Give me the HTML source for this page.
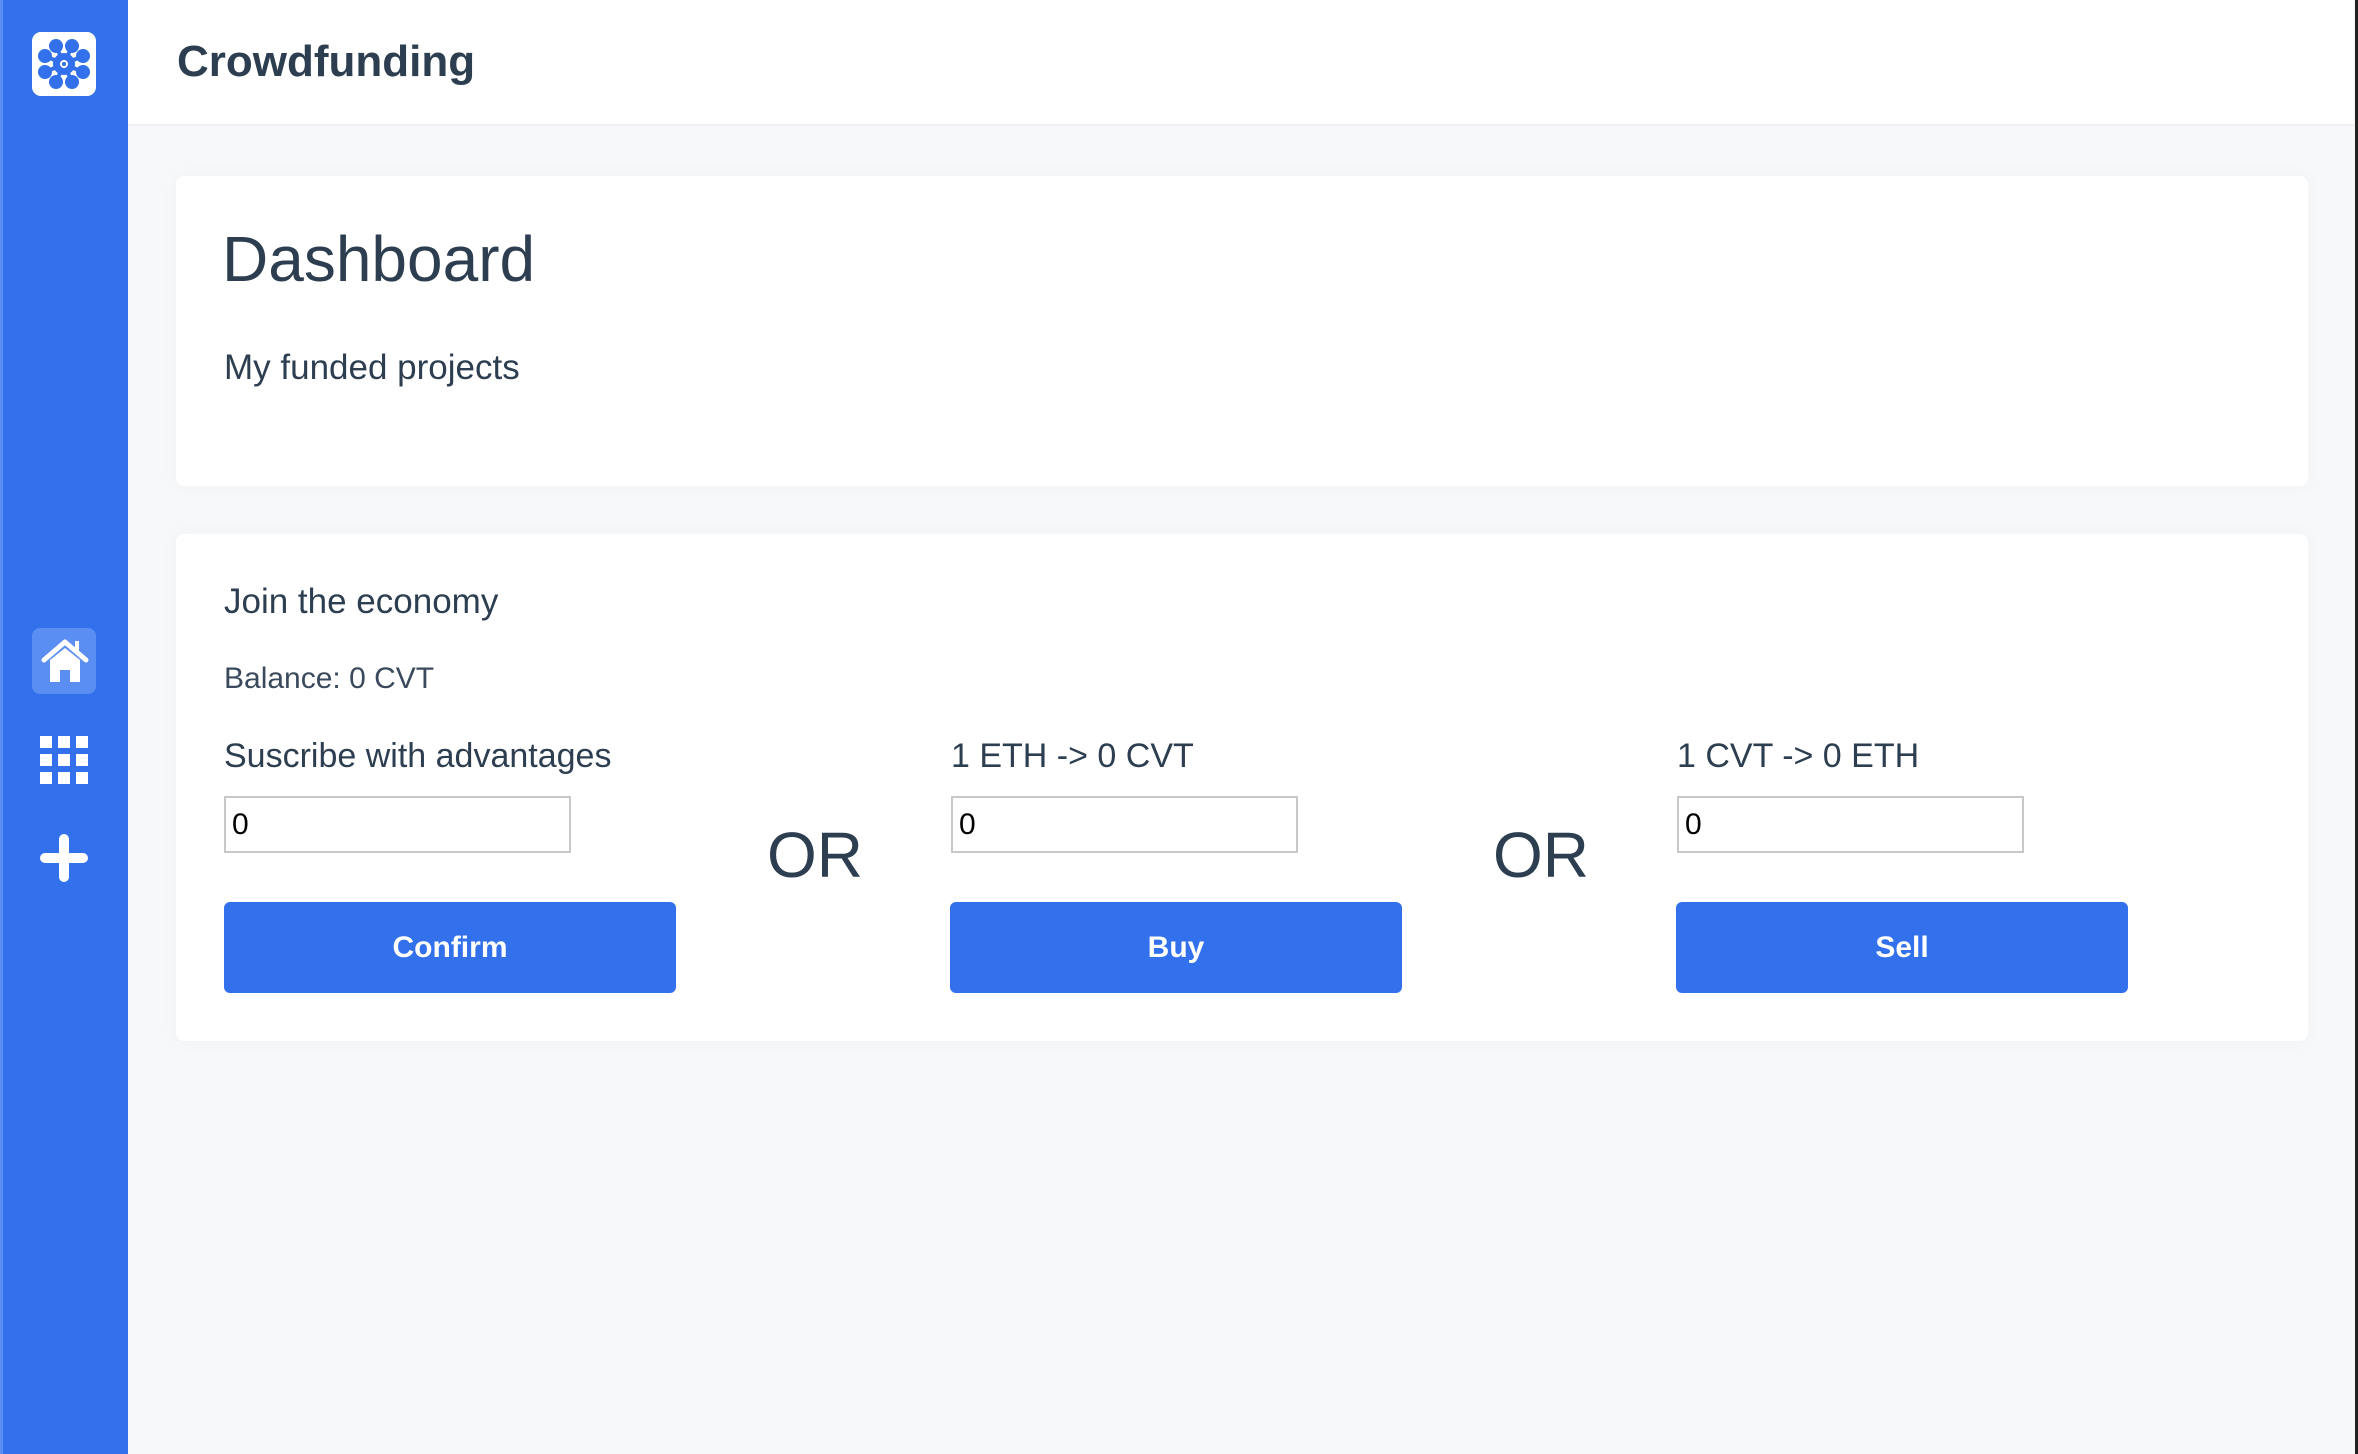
<!DOCTYPE html>
<html><head><meta charset="utf-8"><style>
*{box-sizing:border-box;margin:0;padding:0}
body{width:2358px;height:1454px;background:#f7f8fa;font-family:"Liberation Sans",sans-serif;color:#2c3e50;position:relative;overflow:hidden}
.side{position:absolute;left:0;top:0;width:128px;height:1454px;background:#3370ec;border-left:3px solid #5a8ef2}
.hdr{position:absolute;left:128px;top:0;width:2226px;height:126px;background:#fff;border-bottom:2px solid #eef0f3}
.hdr h1{position:absolute;left:49px;top:37px;font-size:44px;font-weight:bold;color:#2c3e50}
.edge{position:absolute;right:0;top:0;width:3px;height:1454px;background:#222}
.card{position:absolute;left:176px;width:2132px;background:#fff;border-radius:8px;box-shadow:0 0 20px rgba(0,0,0,0.03)}
.t{position:absolute;white-space:nowrap}
input{position:absolute;width:347px;height:57px;border:2px solid #c8c8c8;font-family:"Liberation Sans",sans-serif;font-size:30px;padding-left:6px;color:#000;background:#fff}
.btn{position:absolute;top:902px;width:452px;height:91px;background:#3370ec;border-radius:6px;color:#fff;font-size:30px;font-weight:bold;text-align:center;line-height:91px}
</style></head><body>
<div class="side">
<svg style="position:absolute;left:29px;top:32px" width="64" height="64" viewBox="0 0 64 64">
<rect width="64" height="64" rx="9" fill="#fff"/>
<g stroke="#3370ec" stroke-width="4" fill="#3370ec">
<line x1="32" y1="32" x2="24" y2="14"/><line x1="32" y1="32" x2="40" y2="14"/>
<line x1="32" y1="32" x2="13" y2="24"/><line x1="32" y1="32" x2="51" y2="24"/>
<line x1="32" y1="32" x2="13" y2="40"/><line x1="32" y1="32" x2="51" y2="40"/>
<line x1="32" y1="32" x2="24" y2="50"/><line x1="32" y1="32" x2="40" y2="50"/>
<circle cx="24" cy="14" r="5"/><circle cx="40" cy="14" r="5"/>
<circle cx="13" cy="24" r="5"/><circle cx="51" cy="24" r="5"/>
<circle cx="13" cy="40" r="5"/><circle cx="51" cy="40" r="5"/>
<circle cx="24" cy="50" r="5"/><circle cx="40" cy="50" r="5"/>
<circle cx="32" cy="32" r="9"/>
</g><circle cx="32" cy="32" r="4" fill="#fff"/><circle cx="32" cy="32" r="2" fill="#3370ec"/>
</svg>
<div style="position:absolute;left:29px;top:628px;width:64px;height:66px;border-radius:8px;background:#5a8ef2"></div>
<svg style="position:absolute;left:37px;top:638px" width="50" height="46" viewBox="0 0 50 46">
<path d="M4 22 L25 4 L46 22" stroke="#fff" stroke-width="5" fill="none" stroke-linecap="round" stroke-linejoin="round"/>
<rect x="35" y="3" width="4" height="12" fill="#fff"/>
<path d="M10 22 L25 10 L40 22 L40 44 L30 44 L30 32 L20 32 L20 44 L10 44 Z" fill="#fff"/>
</svg>
<svg style="position:absolute;left:37px;top:736px" width="48" height="48" viewBox="0 0 48 48" fill="#fff">
<rect x="0" y="0" width="12" height="12"/><rect x="18" y="0" width="12" height="12"/><rect x="36" y="0" width="12" height="12"/>
<rect x="0" y="18" width="12" height="12"/><rect x="18" y="18" width="12" height="12"/><rect x="36" y="18" width="12" height="12"/>
<rect x="0" y="36" width="12" height="12"/><rect x="18" y="36" width="12" height="12"/><rect x="36" y="36" width="12" height="12"/>
</svg>
<svg style="position:absolute;left:37px;top:834px" width="48" height="48" viewBox="0 0 48 48">
<path d="M24 5 V43 M5 24 H43" stroke="#fff" stroke-width="10" stroke-linecap="round"/>
</svg>
</div>
<div class="hdr"><h1>Crowdfunding</h1></div>
<div class="edge"></div>
<div class="card" style="top:176px;height:310px"></div>
<div class="t" style="left:222px;top:222px;font-size:64px">Dashboard</div>
<div class="t" style="left:224px;top:348px;font-size:35px">My funded projects</div>
<div class="card" style="top:534px;height:507px"></div>
<div class="t" style="left:224px;top:582px;font-size:35px">Join the economy</div>
<div class="t" style="left:224px;top:662px;font-size:30px;color:#3a4a5c">Balance: 0 CVT</div>
<div class="t" style="left:224px;top:737px;font-size:34px">Suscribe with advantages</div>
<div class="t" style="left:951px;top:737px;font-size:34px">1 ETH -&gt; 0 CVT</div>
<div class="t" style="left:1677px;top:737px;font-size:34px">1 CVT -&gt; 0 ETH</div>
<input style="left:224px;top:796px" value="0">
<input style="left:951px;top:796px" value="0">
<input style="left:1677px;top:796px" value="0">
<div class="t" style="left:767px;top:818px;font-size:64px">OR</div>
<div class="t" style="left:1493px;top:818px;font-size:64px">OR</div>
<div class="btn" style="left:224px">Confirm</div>
<div class="btn" style="left:950px">Buy</div>
<div class="btn" style="left:1676px">Sell</div>
</body></html>
